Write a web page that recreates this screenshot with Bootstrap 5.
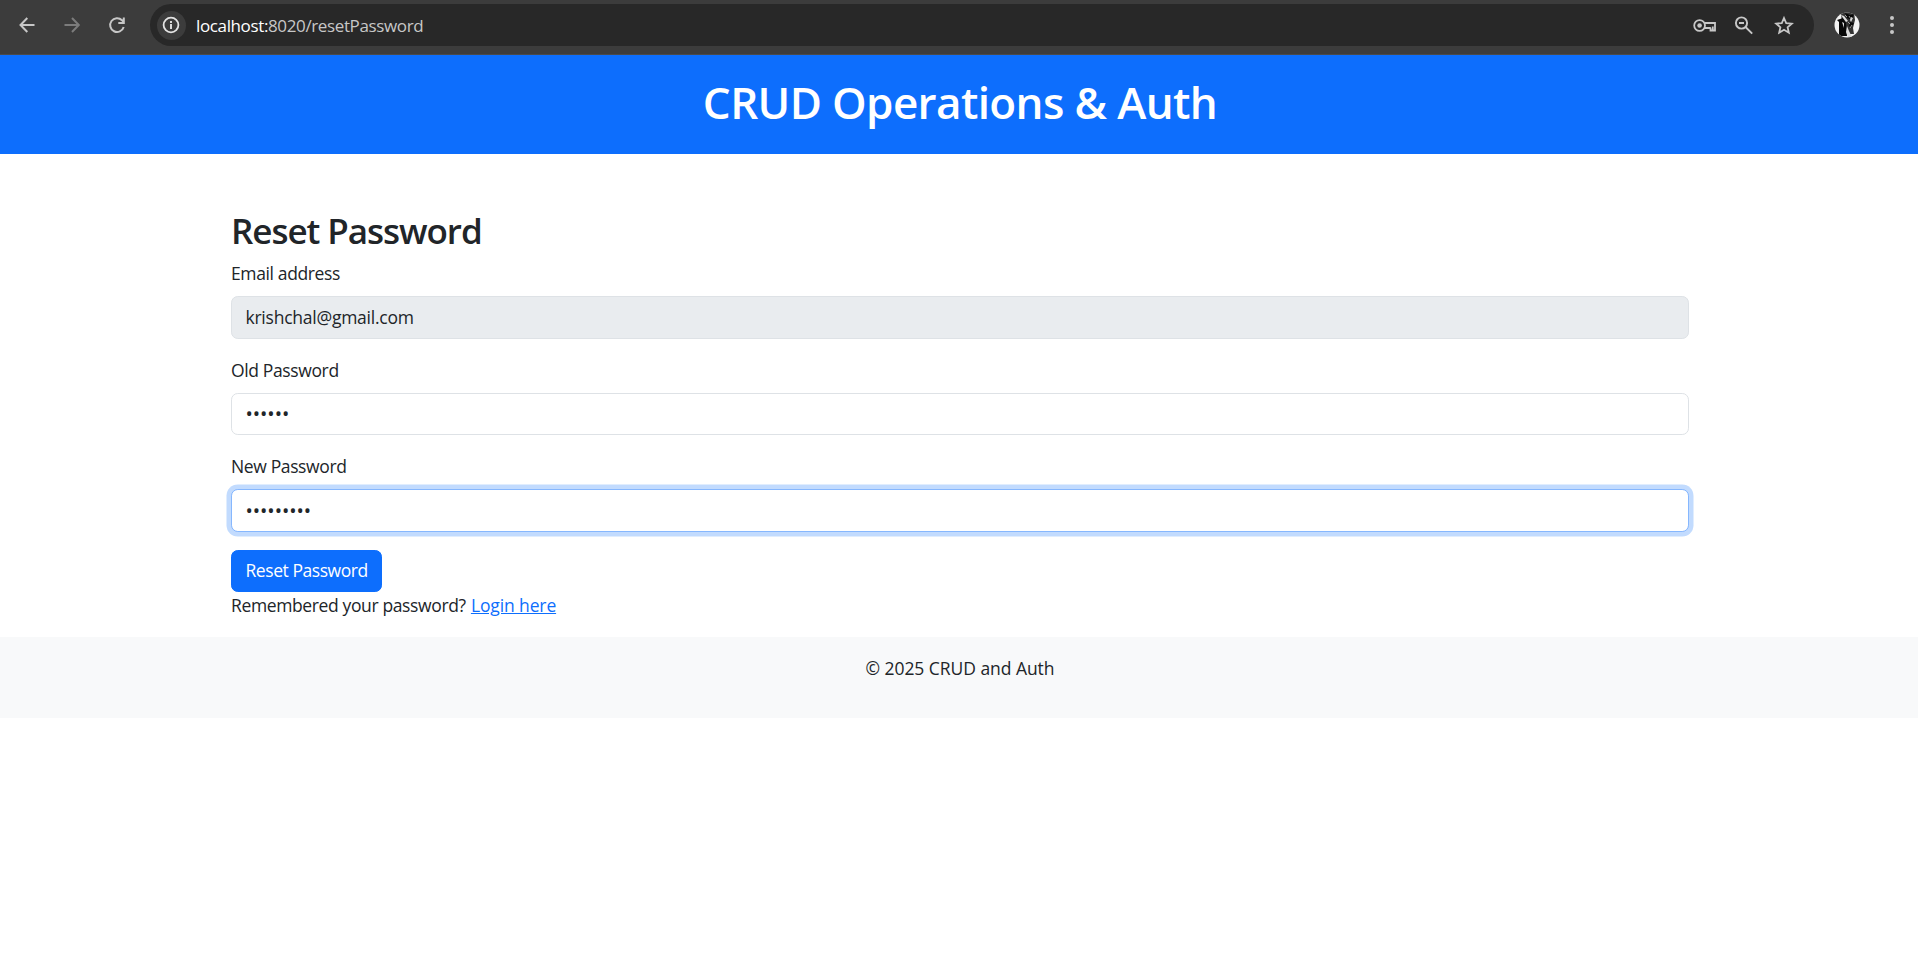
<!DOCTYPE html>
<html lang="en">
<head>
<meta charset="utf-8">
<meta name="viewport" content="width=device-width, initial-scale=1">
<title>Reset Password</title>
<link href="https://cdn.jsdelivr.net/npm/bootstrap@5.3.0/dist/css/bootstrap.min.css" rel="stylesheet">
<style>
html{font-size:18px}
body{font-family:"Open Sans","Noto Sans",sans-serif;font-size:17.5px;line-height:27px;letter-spacing:-.37px;overflow-x:hidden}
.page{width:1920px}
.container{max-width:1485px}
.toolbar{height:55px;background:#3c3c3c;border-bottom:1px solid #4a4a4a;padding:0 23px 5px 0}
.toolbar svg{display:block;flex:none}
.nav-icons{width:150px;padding-left:18px;gap:27px}
.omnibox{height:42px;background:#282828;border-radius:21px;margin-top:1px;padding:0 20px 0 6.5px}
.site-info{width:29px;height:29px;border-radius:50%;background:#3c3c3c}
.address{font-size:17px;color:#c7c7c7;margin-left:10.5px;white-space:nowrap}
.address b{font-weight:400;color:#fff}
.avatar{margin-left:20px}
.dots{margin-left:29px}
.zoom-out{margin-left:17.5px}
.star{margin-left:20px}
h1{font-size:44px;font-weight:600;line-height:54px;letter-spacing:-.62px;padding-top:2px;height:54px}
h2{font-size:35px;font-weight:600;line-height:43.2px;letter-spacing:-1.05px;padding-top:1px;height:43.2px}
.form-label{display:block;line-height:27px}
.form-control{font-size:17.5px;line-height:27px;height:42.55px;letter-spacing:-.24px}
.form-control.secret{font-size:19.5px;line-height:28px;letter-spacing:-.04px}
.form-control.locked{background:#e9ecef}
.form-control.active{border-color:#86b7fe;box-shadow:0 0 0 4.5px rgba(13,110,253,.25)}
.btn{font-size:17.5px;line-height:25px;height:42px;letter-spacing:-.44px}
.login{letter-spacing:-.12px;margin-left:1px}
footer{letter-spacing:-.05px}
</style>
</head>
<body>
<div class="toolbar d-flex align-items-center">
  <div class="nav-icons d-flex align-items-center">
    <svg width="18" height="18" viewBox="0 0 18 18" fill="none" stroke="#c7c7c7" stroke-width="2"><path d="M16.500 9H3M9.300 2L2.500 9l6.800 7"/></svg>
    <svg width="18" height="18" viewBox="0 0 18 18" fill="none" stroke="#7c7c7c" stroke-width="2"><path d="M1.500 9h14M9 2l6.800 7L9 16"/></svg>
    <svg width="18" height="18" viewBox="0 0 18 18" fill="none" stroke="#c7c7c7" stroke-width="2"><path d="M15.700 11A6.900 6.900 0 1 1 14 4.200L15.500 6M15.800 1.500V7h-5.500"/></svg>
  </div>
  <div class="omnibox d-flex align-items-center flex-grow-1">
    <span class="site-info d-flex align-items-center justify-content-center"><svg width="18" height="18" viewBox="0 0 18 18" fill="none" stroke="#e3e3e3"><circle cx="9" cy="9" r="7.400" stroke-width="1.800"/><path d="M9 8v5M9 5v1.900" stroke-width="1.900"/></svg></span>
    <span class="address"><b class="host">localhost:</b>8020/resetPassword</span>
    <div class="d-flex align-items-center ms-auto">
      <svg width="24" height="18" viewBox="0 0 24 18" fill="none" stroke="#c7c7c7" stroke-width="1.800"><circle cx="6.600" cy="9.500" r="5.400"/><circle cx="6.600" cy="9.500" r="2.300" fill="#c7c7c7" stroke="none"/><path d="M11.500 7H22v7.500h-4.500v-2.800M19.800 14v-3.500M17.800 12h-6.300"/></svg>
      <svg class="zoom-out" width="20" height="20" viewBox="0 0 20 20" fill="none" stroke="#c7c7c7" stroke-width="1.900"><circle cx="7.500" cy="8" r="5.600"/><path d="M11.500 12l6.700 6.700M5 8h5"/></svg>
      <svg class="star" width="20" height="20" viewBox="0 0 20 20" fill="none" stroke="#c7c7c7" stroke-width="1.800"><path d="M10 3l2.200 5.100 5.600.5-4.200 3.700 1.200 5.400L10 14.800l-4.800 2.900 1.200-5.400-4.200-3.700 5.600-.5z"/></svg>
    </div>
  </div>
  <svg class="avatar" width="26" height="26" viewBox="0 0 26 26">
    <defs><clipPath id="face"><circle cx="13" cy="13" r="12.500"/></clipPath></defs>
    <g clip-path="url(#face)">
      <path fill="#f2f2f2" d="M0 0h26v26H0z"/>
      <path fill="#333" d="M7 0h13l1 8-2 8 1 6h-6L8 14z"/>
      <path fill="#080808" d="M3 8l6-2 3 5 1 13H5V10zM11 1l5 2 4-1-2 6-5-2zM16 10l4 1-3 5-2-2z"/>
      <path fill="#ddd" d="M13 14l2 5 3 6h-4l-2-5zM7 3l3 1 4 5-2 1-3-4zM17 5l2 1-2 4-1-2zM8 10l2 1v5z"/>
      <path stroke="#999" d="M11 3l2 2m2-1l2 3m-3 3l2 2m0 4l2-3" fill="none"/>
    </g>
  </svg>
  <svg class="dots" width="6" height="20" viewBox="0 0 6 20" fill="#c7c7c7"><circle cx="3" cy="3" r="2"/><circle cx="3" cy="10" r="2"/><circle cx="3" cy="17" r="2"/></svg>
</div>
<div class="page">
<header class="bg-primary text-white text-center p-3"><h1>CRUD Operations &amp; Auth</h1></header>
<main class="container mt-5">
  <h2>Reset Password</h2>
  <form>
    <div class="mb-3"><label class="form-label">Email address</label><div class="form-control locked">krishchal@gmail.com</div></div>
    <div class="mb-3"><label class="form-label">Old Password</label><div class="form-control secret">••••••</div></div>
    <div class="mb-3"><label class="form-label">New Password</label><div class="form-control secret active">•••••••••</div></div>
    <button type="button" class="btn btn-primary">Reset Password</button>
  </form>
  <p class="mb-3">Remembered your password? <a class="login" href="#">Login here</a></p>
</main>
<footer class="bg-light text-center p-3"><p>© 2025 CRUD and Auth</p></footer>
</div>
<script src="https://cdn.jsdelivr.net/npm/bootstrap@5.3.0/dist/js/bootstrap.bundle.min.js"></script>
</body>
</html>
